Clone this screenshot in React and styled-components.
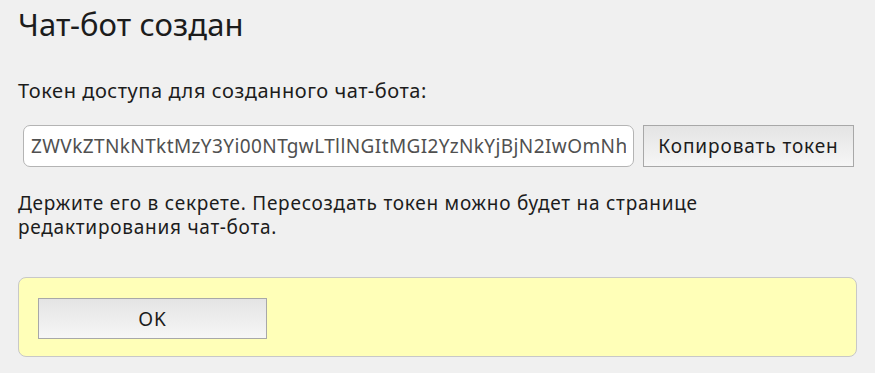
import styled, { createGlobalStyle } from "styled-components";

const GlobalStyle = createGlobalStyle`
  html, body {
    margin: 0;
    background: #f0f0f0;
    font-family: "Noto Sans", "Open Sans", sans-serif;
    color: #1c1c1c;
  }
`;

const Root = styled.div`
  padding: 4px 18px 0 18px;
  width: 839px;
`;

const Title = styled.h1`
  margin: 0;
  font-size: 31px;
  font-weight: 400;
  line-height: 40px;
  letter-spacing: 0.1px;
`;

const Label = styled.p`
  margin: 35px 0 0 0;
  font-size: 20px;
  line-height: 23px;
  letter-spacing: 0.55px;
`;

const TokenRow = styled.div`
  display: flex;
  align-items: center;
  gap: 9px;
  margin-top: 23px;
  padding-left: 5px;
`;

const TokenInput = styled.input`
  box-sizing: border-box;
  width: 611px;
  height: 42px;
  padding: 0 7px;
  border: 1px solid #b4b4b4;
  border-radius: 7px;
  background: #ffffff;
  font-family: inherit;
  font-size: 19px;
  letter-spacing: 0.4px;
  color: #505050;
  outline: none;
`;

const Button = styled.button`
  box-sizing: border-box;
  width: ${(p) => p.$width}px;
  height: ${(p) => p.$height}px;
  border: 1px solid #a8a8a8;
  border-radius: 0;
  background: linear-gradient(#e4e4e4, #f6f6f6);
  font-family: inherit;
  font-size: 19px;
  letter-spacing: 0.9px;
  color: #1c1c1c;
  padding: 0;
`;

const Note = styled.p`
  margin: 24px 0 0 0;
  font-size: 19px;
  line-height: 24px;
  letter-spacing: 0.75px;
`;

const Footer = styled.div`
  box-sizing: border-box;
  margin-top: 38px;
  height: 80px;
  padding: 20px 19px;
  border: 1px solid #c8c8c8;
  border-radius: 8px;
  background: #ffffb8;
`;

const token =
  "ZWVkZTNkNTktMzY3Yi00NTgwLTllNGItMGI2YzNkYjBjN2IwOmNhZTc0ZmQ4";

export default function App() {
  return (
    <>
      <GlobalStyle />
      <Root>
        <Title>Чат-бот создан</Title>
        <Label>Токен доступа для созданного чат-бота:</Label>
        <TokenRow>
          <TokenInput readOnly value={token} />
          <Button $width={211} $height={42}>
            Копировать токен
          </Button>
        </TokenRow>
        <Note>
          Держите его в секрете. Пересоздать токен можно будет на странице
          <br />
          редактирования чат-бота.
        </Note>
        <Footer>
          <Button $width={229} $height={41}>
            OK
          </Button>
        </Footer>
      </Root>
    </>
  );
}
